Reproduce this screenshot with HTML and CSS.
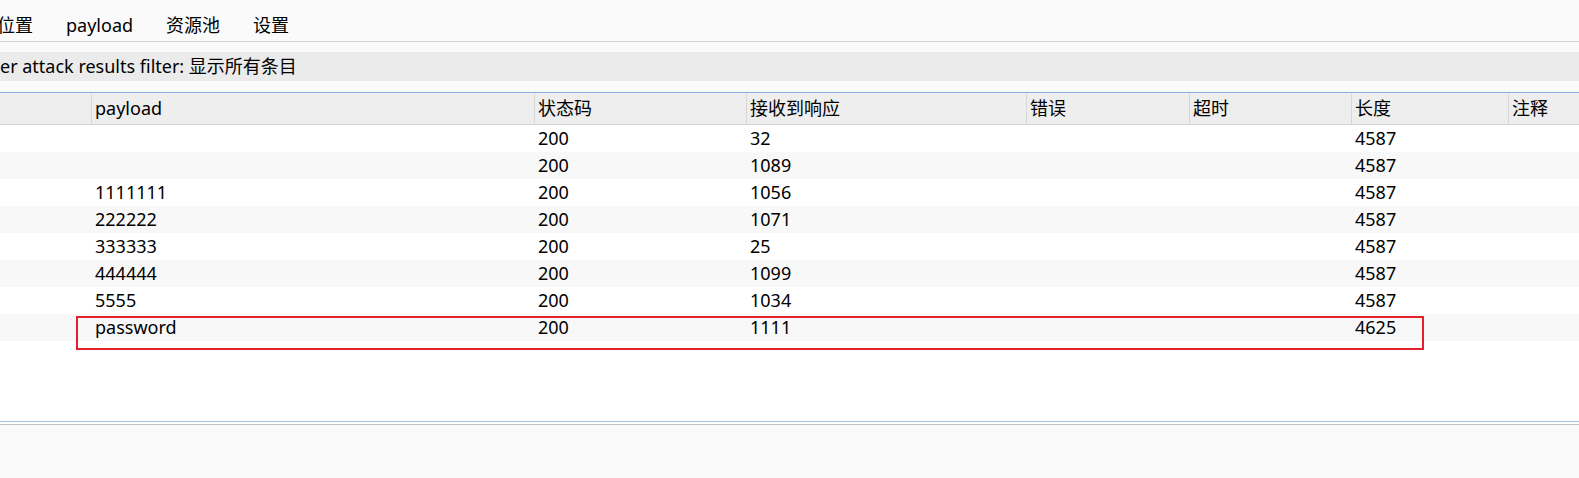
FILE: index.html
```html
<!DOCTYPE html>
<html lang="zh">
<head>
<meta charset="utf-8">
<title>Intruder attack results</title>
<link rel="stylesheet" href="styles.css">
</head>
<body>
<div class="tabs">
  <span class="tab first">位置</span>
  <span class="tab">payload</span>
  <span class="tab">资源池</span>
  <span class="tab">设置</span>
</div>
<div class="spacer"></div>
<div class="filter">er attack results filter: 显示所有条目</div>
<div class="spacer lower"></div>
<div class="results">
  <div class="grid head">
    <div class="hc"></div>
    <div class="hc sep">payload</div>
    <div class="hc sep">状态码</div>
    <div class="hc sep">接收到响应</div>
    <div class="hc sep">错误</div>
    <div class="hc sep">超时</div>
    <div class="hc sep">长度</div>
    <div class="hc sep">注释</div>
  </div>
  <div class="grid row"><div></div><div></div><div>200</div><div>32</div><div></div><div></div><div>4587</div><div></div></div>
  <div class="grid row alt"><div></div><div></div><div>200</div><div>1089</div><div></div><div></div><div>4587</div><div></div></div>
  <div class="grid row"><div></div><div>1111111</div><div>200</div><div>1056</div><div></div><div></div><div>4587</div><div></div></div>
  <div class="grid row alt"><div></div><div>222222</div><div>200</div><div>1071</div><div></div><div></div><div>4587</div><div></div></div>
  <div class="grid row"><div></div><div>333333</div><div>200</div><div>25</div><div></div><div></div><div>4587</div><div></div></div>
  <div class="grid row alt"><div></div><div>444444</div><div>200</div><div>1099</div><div></div><div></div><div>4587</div><div></div></div>
  <div class="grid row"><div></div><div>5555</div><div>200</div><div>1034</div><div></div><div></div><div>4587</div><div></div></div>
  <div class="grid row alt"><div></div><div>password</div><div>200</div><div>1111</div><div></div><div></div><div>4625</div><div></div></div>
  <div class="highlight"></div>
</div>
<div class="footer"></div>
</body>
</html>
```

FILE: styles.css
```css
html, body {
  margin: 0;
  padding: 0;
  background: #ffffff;
  overflow: hidden;
}
body {
  width: 1579px;
  height: 478px;
  font-family: "Noto Sans", "Noto Sans CJK SC", sans-serif;
  font-size: 18px;
  color: #000000;
}
.tabs {
  background: #fafafa;
  border-bottom: 1px solid #d3d3d3;
  display: flex;
  align-items: center;
  padding-top: 9px;
  box-sizing: border-box;
  height: 42px;
}
.tab {
  padding: 0 16px 0 17px;
  line-height: 24px;
}
.tab.first {
  padding-left: 0;
  margin-left: -3px;
}
.spacer {
  height: 10px;
  background: #fafafa;
}
.spacer.lower {
  height: 11px;
}
.filter {
  height: 29px;
  line-height: 29px;
  background: #ebebeb;
  padding-left: 0;
  white-space: nowrap;
}
.results {
  position: relative;
  border-top: 1px solid #8cb2de;
  border-bottom: 1px solid #a5bcd8;
  height: 328px;
  background: #ffffff;
}
.grid {
  display: grid;
  grid-template-columns: 91px 443px 212px 280px 163px 162px 157px 1fr;
}
.head {
  height: 31px;
  background: #eeeeee;
  border-bottom: 1px solid #d4d4d4;
}
.hc {
  line-height: 31px;
  padding-left: 3px;
  white-space: nowrap;
}
.hc.sep {
  border-left: 1px solid #d8d8d8;
}
.row {
  height: 27px;
  line-height: 27px;
}
.row > div {
  padding-left: 4px;
  white-space: nowrap;
}
.row.alt {
  background: #f8f8f8;
}
.highlight {
  position: absolute;
  left: 76px;
  top: 223px;
  width: 1348px;
  height: 34px;
  border: 2px solid #e3202b;
  box-sizing: border-box;
}
.footer {
  margin-top: 2px;
  border-top: 1px solid #c4c0c4;
  height: 60px;
  background: #f9f9f9;
}
```
